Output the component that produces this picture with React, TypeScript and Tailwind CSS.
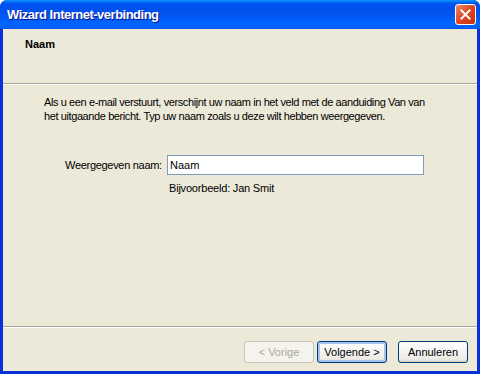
import React from "react";

const font = { fontFamily: "'Liberation Sans', Arial, sans-serif" };

function XpButton({ children, disabled, primary }: { children: React.ReactNode; disabled?: boolean; primary?: boolean }) {
  return (
    <button
      className={
        "flex h-[22px] w-[70px] items-center justify-center rounded-[3px] border text-[11px] " +
        (disabled
          ? "border-[#c9c7ba] bg-[#f4f3ee] text-[#aca899]"
          : primary
            ? "border-[#003c74] bg-[linear-gradient(180deg,#ffffff,#ecebe6_85%,#d6d0c5)] text-black shadow-[inset_0_0_0_2px_#a6c2f0]"
            : "border-[#003c74] bg-[linear-gradient(180deg,#ffffff,#ecebe6_85%,#d6d0c5)] text-black")
      }
    >
      {children}
    </button>
  );
}

export default function App() {
  return (
    <div className="h-[374px] w-[480px] overflow-hidden bg-white" style={font}>
      <div className="flex h-full flex-col rounded-t-[7px] bg-[#0831d9]">
        {/* title bar */}
        <div className="flex h-[29px] shrink-0 items-center justify-between rounded-t-[7px] bg-[linear-gradient(180deg,#0997ff_0%,#0053ee_12%,#0050ee_40%,#0066ff_85%,#0058f0_100%)] pl-[7px] pr-[4px]">
          <span className="text-[13px] font-bold tracking-[-0.5px] text-white [text-shadow:1px_1px_0_#0f1089]">
            Wizard Internet-verbinding
          </span>
          <div className="flex h-[21px] w-[21px] items-center justify-center rounded-[3px] border border-white bg-[linear-gradient(135deg,#e98a6c,#e2441f_50%,#c1300d)]">
            <svg width="11" height="11" viewBox="0 0 11 11">
              <path d="M1.5 1.5 L9.5 9.5 M9.5 1.5 L1.5 9.5" stroke="white" strokeWidth="2" strokeLinecap="square" />
            </svg>
          </div>
        </div>

        {/* window body */}
        <div className="mx-[3px] mb-[3px] flex flex-1 flex-col bg-[#ece9d8] text-[11px] text-black">
          <div className="h-[54px] shrink-0 pl-[22px] pt-[7px]">
            <div className="font-bold">Naam</div>
          </div>
          <div className="h-px bg-[#aca899]" />
          <div className="h-px bg-white" />

          <div className="flex-1 pl-[41px] pr-[20px] pt-[10px]">
            <p className="whitespace-nowrap leading-[14px] tracking-[-0.4px]">
              Als u een e-mail verstuurt, verschijnt uw naam in het veld met de aanduiding Van van
              <br />
              het uitgaande bericht. Typ uw naam zoals u deze wilt hebben weergegeven.
            </p>
            <div className="mt-[32px] flex items-center">
              <label className="w-[123px] whitespace-nowrap pl-[21px] tracking-[-0.3px]">Weergegeven naam:</label>
              <div className="flex h-[20px] w-[257px] items-center border border-[#7f9db9] bg-white pl-[2px]">Naam</div>
            </div>
            <div className="mt-[5px] pl-[125px] tracking-[-0.2px]">Bijvoorbeeld: Jan Smit</div>
          </div>

          <div className="h-px bg-[#aca899]" />
          <div className="h-px bg-white" />
          <div className="flex h-[43px] shrink-0 items-start pl-[241px] pt-[13px]">
            <XpButton disabled>&lt; Vorige</XpButton>
            <div className="ml-[3px]">
              <XpButton primary>Volgende &gt;</XpButton>
            </div>
            <div className="ml-[11px]">
              <XpButton>Annuleren</XpButton>
            </div>
          </div>
        </div>
      </div>
    </div>
  );
}
